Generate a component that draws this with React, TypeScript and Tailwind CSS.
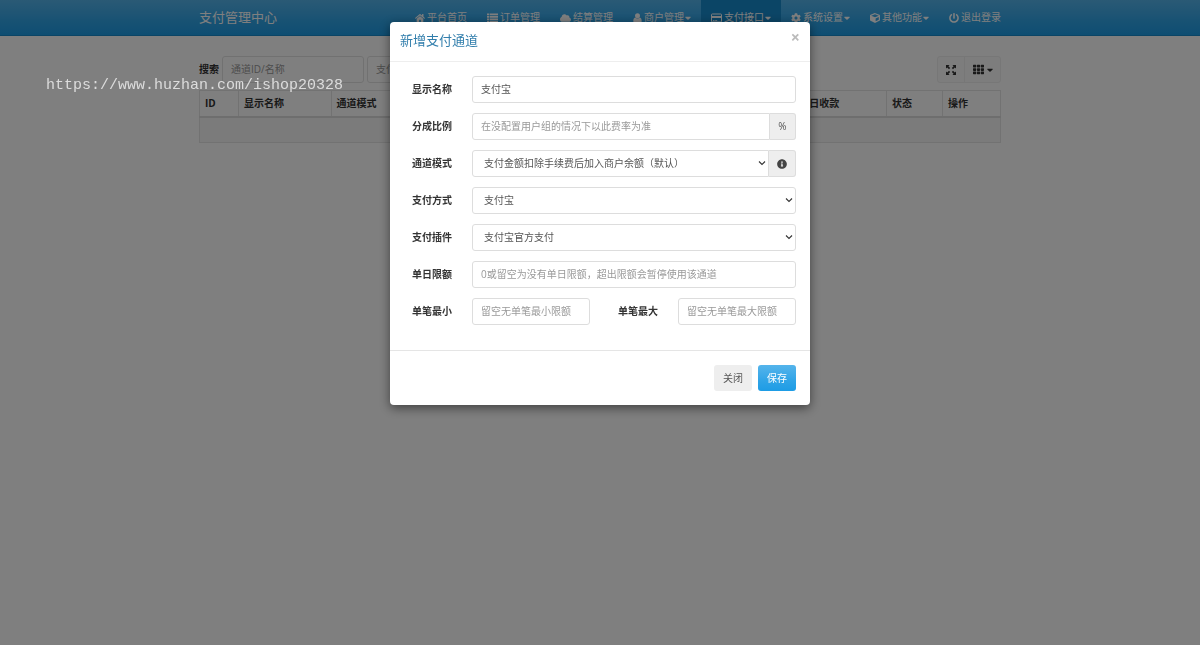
import React, { useState } from "react";
import {
  FaCaretDown,
  FaCloud,
  FaCog,
  FaCube,
  FaHome,
  FaInfoCircle,
  FaPowerOff,
  FaTh,
} from "react-icons/fa";

type IconProps = { className?: string };

const ListIcon = ({ className }: IconProps) => (
  <svg viewBox="0 0 11 10" className={className} fill="currentColor">
    <path d="M0 .5h2v1.8H0zM0 3h2v1.8H0zM0 5.5h2v1.8H0zM0 8h2v1.8H0z" />
    <path d="M2.6.5H11v1.8H2.6zM2.6 3H11v1.8H2.6zM2.6 5.5H11v1.8H2.6zM2.6 8H11v1.8H2.6z" />
  </svg>
);

const UserIcon = ({ className }: IconProps) => (
  <svg viewBox="0 0 9 10" className={className} fill="currentColor">
    <circle cx="4.5" cy="2.8" r="2.5" />
    <path d="M2.2 4.6C.8 5 .3 6.4.3 8c0 1.1.6 1.7 1.5 1.7h5.4c.9 0 1.5-.6 1.5-1.7 0-1.6-.5-3-1.9-3.4-.6.6-1.4 1-2.3 1s-1.7-.4-2.3-1z" />
  </svg>
);

const CardIcon = ({ className }: IconProps) => (
  <svg viewBox="0 0 11 10" className={className} fill="none">
    <rect x=".5" y="1" width="10" height="8" rx=".8" stroke="currentColor" />
    <path d="M.5 3h10v2H.5z" fill="currentColor" />
    <path d="M2 7.5h1.500M4.200 7.5h2" stroke="currentColor" strokeWidth=".8" />
  </svg>
);

const FullscreenIcon = () => (
  <svg viewBox="0 0 12 12" className="h-3 w-3" fill="currentColor">
    <path d="M1 1h3.6L3.4 2.2l1.8 1.8L4 5.2 2.2 3.4 1 4.6z" />
    <path d="M11 1v3.6L9.8 3.4 8 5.2 6.8 4l1.8-1.8L7.4 1z" />
    <path d="M1 11V7.4l1.2 1.2L4 6.8 5.2 8 3.4 9.8 4.6 11z" />
    <path d="M11 11H7.4l1.2-1.2L6.8 8 8 6.8l1.8 1.8L11 7.4z" />
  </svg>
);

const navItems = [
  { label: "平台首页", icon: FaHome, size: "w-[10px]" },
  { label: "订单管理", icon: ListIcon, size: "w-[11px]" },
  { label: "结算管理", icon: FaCloud, size: "w-[11px]" },
  { label: "商户管理", icon: UserIcon, size: "w-[9px]", caret: true },
  {
    label: "支付接口",
    icon: CardIcon,
    size: "w-[11px]",
    caret: true,
    active: true,
  },
  { label: "系统设置", icon: FaCog, size: "w-[10px]", caret: true },
  { label: "其他功能", icon: FaCube, size: "w-[10px]", caret: true },
  { label: "退出登录", icon: FaPowerOff, size: "w-[10px]" },
];

const columns = [
  { label: "ID", width: "w-[39px]" },
  { label: "显示名称" },
  { label: "通道模式" },
  { label: "支付方式" },
  { label: "支付插件" },
  { label: "分成比例" },
  { label: "今日收款" },
  { label: "昨日收款" },
  { label: "状态", width: "w-14" },
  { label: "操作", width: "w-[58px]" },
];

const control =
  "h-[27px] w-full min-w-0 flex-1 rounded-[3px] border border-[#ddd] bg-white text-[10px] text-[#555] placeholder:text-[#999] outline-none";
const inputClass = `${control} px-2 pb-0.5`;
const searchClass =
  "h-[27px] w-[142px] rounded-[3px] border border-[#e2e2e2] px-2 pb-0.5 text-[10px] placeholder:text-[#999]";
const addonClass =
  "flex h-[27px] shrink-0 items-center justify-center rounded-r-[3px] border border-l-0 border-[#ddd] bg-[#eee] text-[10px] text-[#555]";

const Navbar = () => (
  <nav className="h-9 border-b border-[#178acc] bg-linear-to-b from-[#54b4eb] via-[#2fa4e7] via-60% to-[#1d9ce5] text-white">
    <div className="mx-auto flex h-full max-w-[802px] items-center justify-between">
      <a href="#" className="pb-0.5 text-[13px] leading-4">
        支付管理中心
      </a>
      <ul className="-mr-[10px] flex h-full">
        {navItems.map(({ label, icon: Icon, size, caret, active }) => (
          <li key={label}>
            <a
              href="#"
              className={`flex h-full items-center px-[10px] text-[10px] ${
                active ? "bg-[#178acc]" : ""
              }`}
            >
              <Icon className={`mr-0.5 h-[10px] ${size}`} />
              {label}
              {caret && <FaCaretDown className="ml-px h-[10px] w-[6px]" />}
            </a>
          </li>
        ))}
      </ul>
    </div>
  </nav>
);

const ChannelList = () => (
  <main className="mx-auto max-w-[802px] pt-5">
    <div className="flex items-center justify-between">
      <form className="flex items-center gap-[3px]">
        <label htmlFor="keyword" className="text-[10px] font-bold">
          搜索
        </label>
        <input
          id="keyword"
          placeholder="通道ID/名称"
          className={searchClass}
        />
        <input
          aria-label="支付插件"
          placeholder="支付插件"
          className={searchClass}
        />
      </form>
      <div className="flex h-[27px] rounded-[3px] border border-[#eee] bg-[#fafafa] text-[#333]">
        <button
          aria-label="全屏"
          className="flex w-[27px] items-center justify-center border-r border-[#eee]"
        >
          <FullscreenIcon />
        </button>
        <button
          aria-label="列"
          className="flex w-[35px] items-center justify-center gap-[3px]"
        >
          <FaTh className="h-[11px] w-[11px]" />
          <FaCaretDown className="h-[10px] w-[6px]" />
        </button>
      </div>
    </div>

    <table className="mt-[7px] w-full table-fixed border-collapse border border-[#e5e5e5] text-left text-[10px] leading-[14px]">
      <thead>
        <tr className="h-[26px] border-b-2 border-[#ddd]">
          {columns.map((col) => (
            <th
              key={col.label}
              className={`border-r border-r-[#e5e5e5] px-[5px] font-bold ${col.width ?? ""}`}
            >
              {col.label}
            </th>
          ))}
        </tr>
      </thead>
      <tbody>
        <tr className="h-[26px] bg-[#f7f7f7]">
          <td colSpan={columns.length}></td>
        </tr>
      </tbody>
    </table>
  </main>
);

const Field = ({
  id,
  label,
  children,
}: {
  id: string;
  label: string;
  children: React.ReactNode;
}) => (
  <div className="flex items-center gap-5">
    <label
      htmlFor={id}
      className="w-10 shrink-0 whitespace-nowrap pb-px text-right text-[10px] font-bold text-[#333]"
    >
      {label}
    </label>
    <div className="flex min-w-0 flex-1">{children}</div>
  </div>
);

const Select = ({
  id,
  option,
  className = "",
}: {
  id: string;
  option: string;
  className?: string;
}) => (
  <div className="relative flex min-w-0 flex-1">
    <select
      id={id}
      className={`${control} appearance-none pl-[11px] ${className}`}
    >
      <option>{option}</option>
    </select>
    <svg
      viewBox="0 0 8 8"
      className="pointer-events-none absolute top-[9px] right-[3px] h-2 w-2"
      fill="none"
      stroke="#333"
      strokeWidth="1.1"
    >
      <path d="M1 2.5l3 3 3-3" />
    </svg>
  </div>
);

const ChannelModal = () => {
  const [name, setName] = useState("支付宝");

  return (
    <div
      role="dialog"
      aria-labelledby="modal-title"
      className="mx-auto mt-[22px] max-w-[420px] rounded bg-white shadow-[0_3px_11px_rgba(0,0,0,0.5)]"
    >
      <div className="flex h-10 items-start justify-between border-b border-[#eee] px-[10px]">
        <h4
          id="modal-title"
          className="pt-[9px] text-[13px] leading-[18px] text-[#317eac]"
        >
          新增支付通道
        </h4>
        <button
          aria-label="关闭窗口"
          className="pt-[7px] text-[16px] leading-4 font-bold text-[#bbb]"
        >
          ×
        </button>
      </div>

      <form className="flex flex-col gap-[10px] pt-[14px] pr-[14px] pb-[25px] pl-[22px]">
        <Field id="name" label="显示名称">
          <input
            id="name"
            value={name}
            onChange={(e) => setName(e.target.value)}
            className={inputClass}
          />
        </Field>
        <Field id="rate" label="分成比例">
          <input
            id="rate"
            placeholder="在没配置用户组的情况下以此费率为准"
            className={`${inputClass} rounded-r-none`}
          />
          <span className={`${addonClass} w-[26px]`}>%</span>
        </Field>
        <Field id="mode" label="通道模式">
          <Select
            id="mode"
            option="支付金额扣除手续费后加入商户余额（默认）"
            className="rounded-r-none"
          />
          <span className={`${addonClass} w-[27px]`}>
            <FaInfoCircle className="h-[10px] w-[10px] text-[#444]" />
          </span>
        </Field>
        <Field id="type" label="支付方式">
          <Select id="type" option="支付宝" />
        </Field>
        <Field id="plugin" label="支付插件">
          <Select id="plugin" option="支付宝官方支付" />
        </Field>
        <Field id="daytop" label="单日限额">
          <input
            id="daytop"
            placeholder="0或留空为没有单日限额，超出限额会暂停使用该通道"
            className={inputClass}
          />
        </Field>
        <div className="grid grid-cols-2 gap-7">
          <Field id="paymin" label="单笔最小">
            <input
              id="paymin"
              placeholder="留空无单笔最小限额"
              className={inputClass}
            />
          </Field>
          <Field id="paymax" label="单笔最大">
            <input
              id="paymax"
              placeholder="留空无单笔最大限额"
              className={inputClass}
            />
          </Field>
        </div>
      </form>

      <div className="flex justify-end gap-[6px] border-t border-[#e5e5e5] p-[14px] text-[10px]">
        <button className="h-[26px] rounded-[3px] bg-[#eee] px-[9px] text-[#555]">
          关闭
        </button>
        <button className="h-[26px] rounded-[3px] bg-linear-to-b from-[#54b4eb] via-[#2fa4e7] via-60% to-[#1d9ce5] px-[9px] text-white">
          保存
        </button>
      </div>
    </div>
  );
};

const App = () => {
  return (
    <div className="min-h-screen bg-white font-['Open_Sans','Noto_Sans_CJK_SC',sans-serif] text-[#333]">
      <Navbar />
      <ChannelList />
      <div className="fixed inset-0 overflow-auto bg-black/50">
        <ChannelModal />
      </div>
      <p className="pointer-events-none absolute top-[77px] left-[46px] font-['Liberation_Mono',monospace] text-[15px] leading-[18px] text-[#dcdcdc]">
        https://www.huzhan.com/ishop20328
      </p>
    </div>
  );
};

export default App;
